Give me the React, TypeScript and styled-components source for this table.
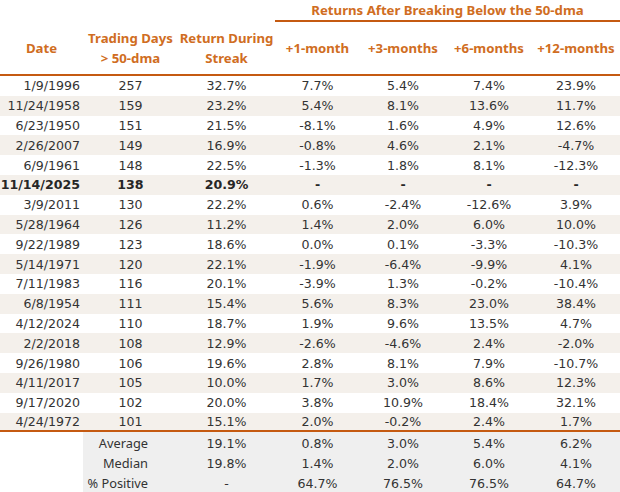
import React from "react";
import styled, { createGlobalStyle } from "styled-components";

const GlobalStyle = createGlobalStyle`
  body {
    margin: 0;
    background: #ffffff;
  }
`;

const ORANGE = "#c55a11";
const HEAD = "#d06d22";

type Row = {
  date: string;
  days: string;
  streak: string;
  m1: string;
  m3: string;
  m6: string;
  m12: string;
  current?: boolean;
};

const rows: Row[] = [
  { date: "1/9/1996", days: "257", streak: "32.7%", m1: "7.7%", m3: "5.4%", m6: "7.4%", m12: "23.9%" },
  { date: "11/24/1958", days: "159", streak: "23.2%", m1: "5.4%", m3: "8.1%", m6: "13.6%", m12: "11.7%" },
  { date: "6/23/1950", days: "151", streak: "21.5%", m1: "-8.1%", m3: "1.6%", m6: "4.9%", m12: "12.6%" },
  { date: "2/26/2007", days: "149", streak: "16.9%", m1: "-0.8%", m3: "4.6%", m6: "2.1%", m12: "-4.7%" },
  { date: "6/9/1961", days: "148", streak: "22.5%", m1: "-1.3%", m3: "1.8%", m6: "8.1%", m12: "-12.3%" },
  { date: "11/14/2025", days: "138", streak: "20.9%", m1: "-", m3: "-", m6: "-", m12: "-", current: true },
  { date: "3/9/2011", days: "130", streak: "22.2%", m1: "0.6%", m3: "-2.4%", m6: "-12.6%", m12: "3.9%" },
  { date: "5/28/1964", days: "126", streak: "11.2%", m1: "1.4%", m3: "2.0%", m6: "6.0%", m12: "10.0%" },
  { date: "9/22/1989", days: "123", streak: "18.6%", m1: "0.0%", m3: "0.1%", m6: "-3.3%", m12: "-10.3%" },
  { date: "5/14/1971", days: "120", streak: "22.1%", m1: "-1.9%", m3: "-6.4%", m6: "-9.9%", m12: "4.1%" },
  { date: "7/11/1983", days: "116", streak: "20.1%", m1: "-3.9%", m3: "1.3%", m6: "-0.2%", m12: "-10.4%" },
  { date: "6/8/1954", days: "111", streak: "15.4%", m1: "5.6%", m3: "8.3%", m6: "23.0%", m12: "38.4%" },
  { date: "4/12/2024", days: "110", streak: "18.7%", m1: "1.9%", m3: "9.6%", m6: "13.5%", m12: "4.7%" },
  { date: "2/2/2018", days: "108", streak: "12.9%", m1: "-2.6%", m3: "-4.6%", m6: "2.4%", m12: "-2.0%" },
  { date: "9/26/1980", days: "106", streak: "19.6%", m1: "2.8%", m3: "8.1%", m6: "7.9%", m12: "-10.7%" },
  { date: "4/11/2017", days: "105", streak: "10.0%", m1: "1.7%", m3: "3.0%", m6: "8.6%", m12: "12.3%" },
  { date: "9/17/2020", days: "102", streak: "20.0%", m1: "3.8%", m3: "10.9%", m6: "18.4%", m12: "32.1%" },
  { date: "4/24/1972", days: "101", streak: "15.1%", m1: "2.0%", m3: "-0.2%", m6: "2.4%", m12: "1.7%" },
];

const summary = [
  { label: "Average", streak: "19.1%", m1: "0.8%", m3: "3.0%", m6: "5.4%", m12: "6.2%" },
  { label: "Median", streak: "19.8%", m1: "1.4%", m3: "2.0%", m6: "6.0%", m12: "4.1%" },
  { label: "% Positive", streak: "-", m1: "64.7%", m3: "76.5%", m6: "76.5%", m12: "64.7%" },
];

const widths = [83, 95, 97, 85, 86, 86, 88];

const Table = styled.table`
  width: 620px;
  table-layout: fixed;
  border-spacing: 0;
  font-family: "DejaVu Sans", Verdana, sans-serif;
  font-size: 12.6px;
  color: #333333;
`;

const HeadCell = styled.th<{ $rule?: boolean }>`
  padding: 0;
  font-family: "Noto Sans", "Open Sans", sans-serif;
  font-weight: 700;
  font-size: 13.2px;
  line-height: 20px;
  color: ${HEAD};
  text-align: center;
  white-space: nowrap;
  vertical-align: middle;
  border-bottom: ${(p) => (p.$rule ? `2px solid ${ORANGE}` : "none")};
`;

const GroupRow = styled.tr`
  height: 21px;
`;

const LabelRow = styled.tr`
  height: 54px;
`;

const BodyRow = styled.tr<{ $shade: boolean; $current?: boolean }>`
  height: 19.8px;
  background: ${(p) => (p.$shade ? "#f4f0eb" : "#ffffff")};
  font-weight: ${(p) => (p.$current ? 700 : 400)};
  color: ${(p) => (p.$current ? "#262626" : "#333333")};
`;

const Cell = styled.td<{ $align?: string; $last?: boolean }>`
  padding: 0 ${(p) => (p.$align === "right" ? "3px" : "0")} 0 0;
  text-align: ${(p) => p.$align || "center"};
  white-space: nowrap;
  line-height: 17px;
  border-bottom: ${(p) => (p.$last ? `2px solid ${ORANGE}` : "none")};
`;

const SumRow = styled.tr`
  height: 20px;
`;

const SumCell = styled.td<{ $blank?: boolean }>`
  padding: 2px 0 0;
  text-align: center;
  line-height: 17px;
  background: ${(p) => (p.$blank ? "#ffffff" : "#efefef")};
`;

const SumLabel = styled(SumCell)`
  text-align: right;
  padding-right: 30px;
  font-family: "Noto Sans", "Open Sans", sans-serif;
  font-size: 12.8px;
  color: #333333;
`;

export default function App() {
  return (
    <>
      <GlobalStyle />
      <Table>
        <colgroup>
          {widths.map((w, i) => (
            <col key={i} style={{ width: w }} />
          ))}
        </colgroup>
        <thead>
          <GroupRow>
            <HeadCell colSpan={3} />
            <HeadCell colSpan={4} $rule>
              Returns After Breaking Below the 50-dma
            </HeadCell>
          </GroupRow>
          <LabelRow>
            <HeadCell $rule>Date</HeadCell>
            <HeadCell $rule>
              Trading Days
              <br />
              &gt; 50-dma
            </HeadCell>
            <HeadCell $rule>
              Return During
              <br />
              Streak
            </HeadCell>
            <HeadCell $rule>+1-month</HeadCell>
            <HeadCell $rule>+3-months</HeadCell>
            <HeadCell $rule>+6-months</HeadCell>
            <HeadCell $rule>+12-months</HeadCell>
          </LabelRow>
        </thead>
        <tbody>
          {rows.map((r, i) => {
            const last = i === rows.length - 1;
            return (
              <BodyRow key={r.date} $shade={i % 2 === 1} $current={r.current}>
                <Cell $align="right" $last={last}>
                  {r.date}
                </Cell>
                <Cell $last={last}>{r.days}</Cell>
                <Cell $last={last}>{r.streak}</Cell>
                <Cell $last={last}>{r.m1}</Cell>
                <Cell $last={last}>{r.m3}</Cell>
                <Cell $last={last}>{r.m6}</Cell>
                <Cell $last={last}>{r.m12}</Cell>
              </BodyRow>
            );
          })}
          {summary.map((s) => (
            <SumRow key={s.label}>
              <SumCell $blank />
              <SumLabel>{s.label}</SumLabel>
              <SumCell>{s.streak}</SumCell>
              <SumCell>{s.m1}</SumCell>
              <SumCell>{s.m3}</SumCell>
              <SumCell>{s.m6}</SumCell>
              <SumCell>{s.m12}</SumCell>
            </SumRow>
          ))}
        </tbody>
      </Table>
    </>
  );
}
